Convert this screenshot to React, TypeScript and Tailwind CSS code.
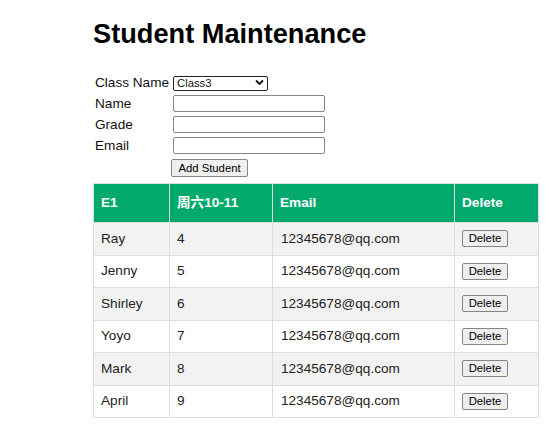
import React from 'react';

const students = [
  { name: 'Ray', grade: '4', email: '12345678@qq.com' },
  { name: 'Jenny', grade: '5', email: '12345678@qq.com' },
  { name: 'Shirley', grade: '6', email: '12345678@qq.com' },
  { name: 'Yoyo', grade: '7', email: '12345678@qq.com' },
  { name: 'Mark', grade: '8', email: '12345678@qq.com' },
  { name: 'April', grade: '9', email: '12345678@qq.com' },
];

const font = { fontFamily: '"Liberation Sans", Arial, "Noto Sans CJK SC", sans-serif' };

export default function App() {
  return (
    <div className="min-h-screen bg-white text-[#111]" style={font}>
      <div className="ml-[93px] w-[445px] pt-[18px]">
        <h1 className="text-[27.2px] font-bold leading-[31px] text-black">Student Maintenance</h1>

        {/* form */}
        <div className="mt-[23px] ml-[2px] text-[13.6px] leading-[16px]">
          <div className="flex h-[21px] items-center">
            <label className="w-[78px] shrink-0">Class Name</label>
            <div className="relative">
              <select
                defaultValue="Class3"
                className="h-[15px] w-[95px] appearance-none rounded-[2px] border border-[#222] bg-white pl-[3px] text-[11.3px] leading-[13px] outline-none"
              >
                <option>Class1</option>
                <option>Class2</option>
                <option>Class3</option>
              </select>
              <svg className="pointer-events-none absolute right-[4px] top-[4px]" width="9" height="7" viewBox="0 0 9 7">
                <path d="M1 1.5 L4.5 5 L8 1.5" fill="none" stroke="#111" strokeWidth="1.8" />
              </svg>
            </div>
          </div>
          {['Name', 'Grade', 'Email'].map((l) => (
            <div key={l} className="flex h-[21px] items-center">
              <label className="w-[78px] shrink-0">{l}</label>
              <input className="h-[17px] w-[152px] rounded-[2px] border border-[#858585] bg-white outline-none" />
            </div>
          ))}
          <div className="flex h-[24px] items-center">
            <div className="w-[76px] shrink-0" />
            <button className="h-[18px] w-[77px] rounded-[2px] border border-[#858585] bg-[#efefef] text-[11.3px] leading-[14px] text-black">
              Add Student
            </button>
          </div>
        </div>

        {/* table */}
        <table className="mt-[3px] w-[445px] table-fixed border-collapse text-[13.6px]">
          <colgroup>
            <col className="w-[76px]" />
            <col className="w-[103px]" />
            <col className="w-[182px]" />
            <col className="w-[84px]" />
          </colgroup>
          <thead>
            <tr className="bg-[#04AA6D] text-white">
              {['E1', '周六10-11', 'Email', 'Delete'].map((h) => (
                <th key={h} className="h-[39px] border border-[#ddd] px-[7px] text-left font-bold leading-[16px]">
                  {h}
                </th>
              ))}
            </tr>
          </thead>
          <tbody>
            {students.map((s, i) => (
              <tr key={s.name} className={i % 2 === 0 ? 'bg-[#f2f2f2]' : 'bg-white'}>
                <td className="h-[32.5px] border border-[#ddd] px-[7px] leading-[16px] text-[#222]">{s.name}</td>
                <td className="h-[32.5px] border border-[#ddd] px-[7px] leading-[16px] text-[#222]">{s.grade}</td>
                <td className="h-[32.5px] border border-[#ddd] px-[8px] leading-[16px] text-[#222]">{s.email}</td>
                <td className="h-[32.5px] border border-[#ddd] px-[7px] leading-[16px]">
                  <button className="flex h-[17px] w-[46px] items-center justify-center rounded-[2px] border border-[#858585] bg-[#efefef] text-[11.3px] leading-[13px] text-black">
                    Delete
                  </button>
                </td>
              </tr>
            ))}
          </tbody>
        </table>
      </div>
    </div>
  );
}
